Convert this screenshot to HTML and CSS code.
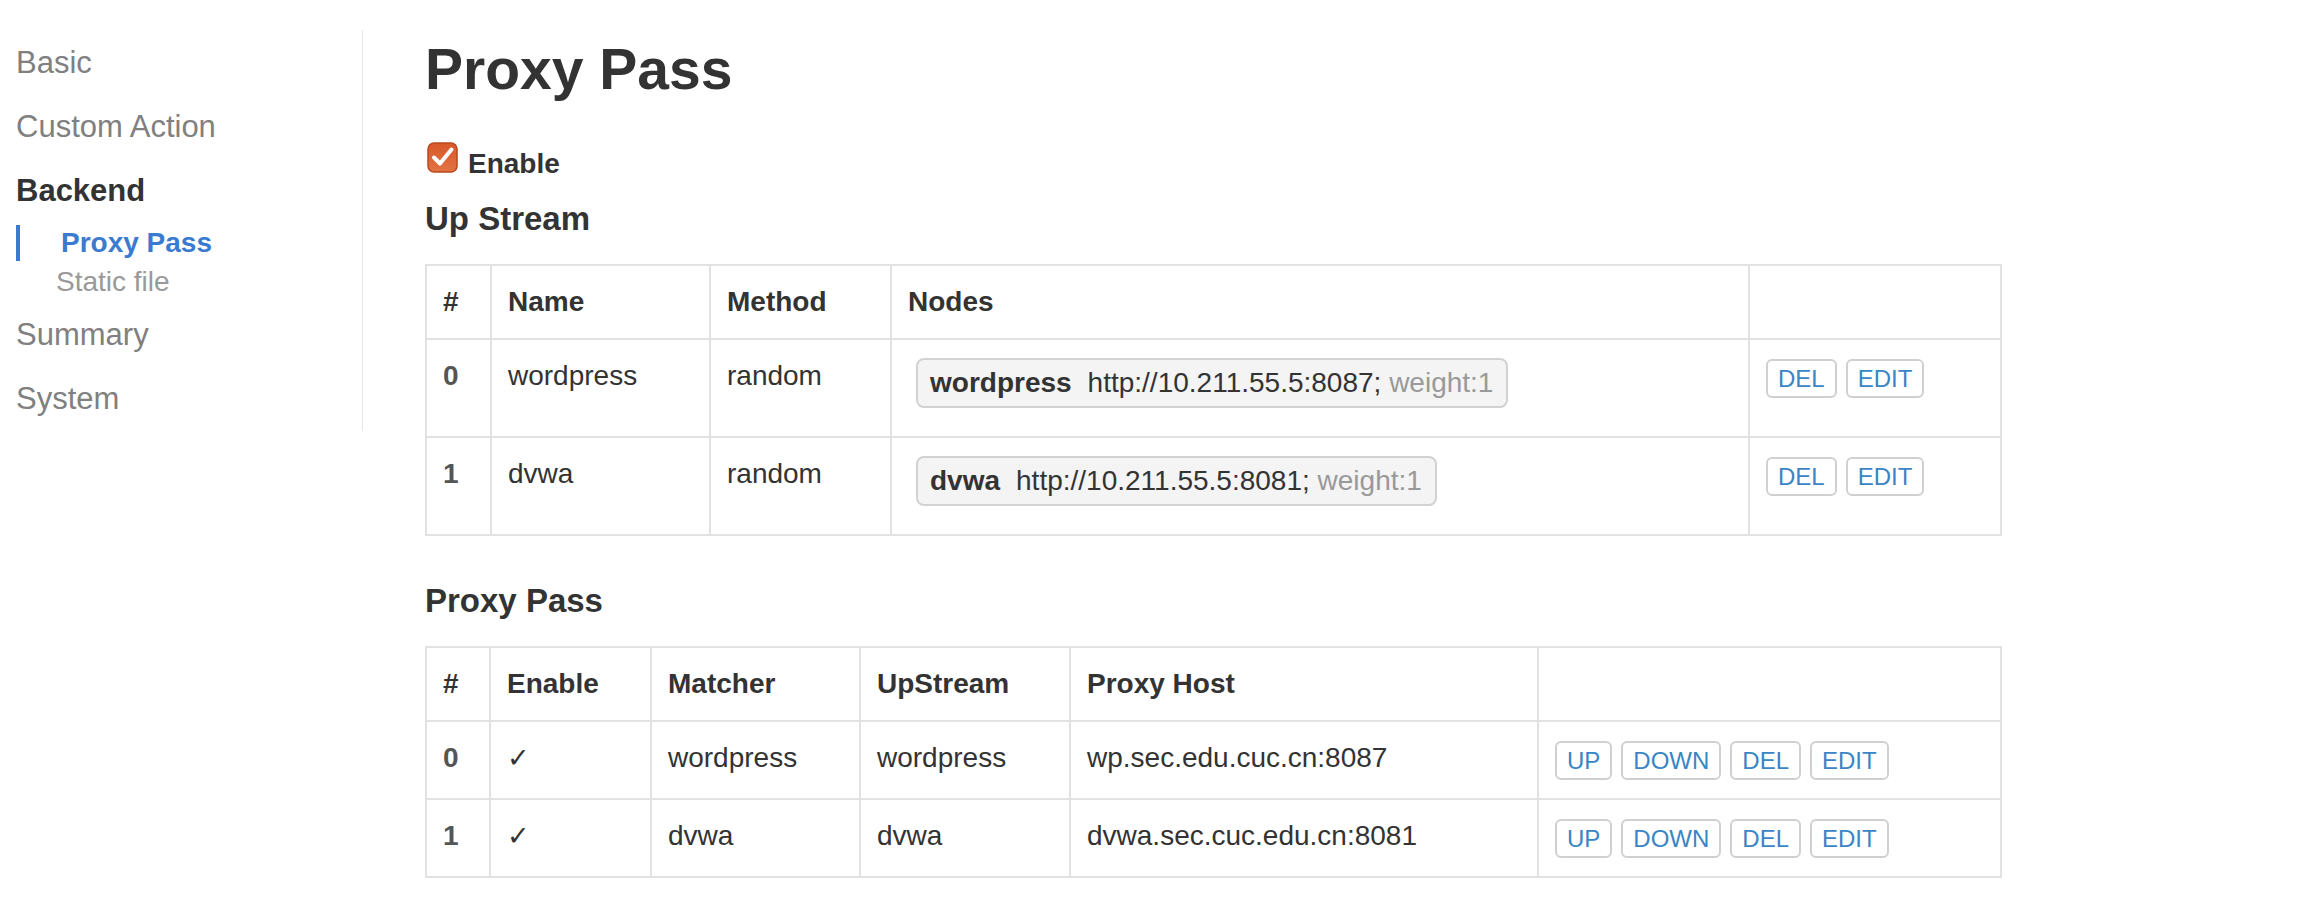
FILE: index.html
```html
<!DOCTYPE html>
<html lang="en">
<head>
<meta charset="utf-8">
<title>Proxy Pass</title>
<link rel="stylesheet" href="styles.css">
</head>
<body>
<div class="page">
  <nav class="sidebar">
    <ul class="nav">
      <li><a class="nav-link">Basic</a></li>
      <li><a class="nav-link">Custom Action</a></li>
      <li>
        <a class="nav-link current">Backend</a>
        <ul class="subnav">
          <li><a class="sub-link active">Proxy Pass</a></li>
          <li><a class="sub-link">Static file</a></li>
        </ul>
      </li>
      <li><a class="nav-link">Summary</a></li>
      <li><a class="nav-link">System</a></li>
    </ul>
  </nav>

  <main class="main">
    <h1 class="title">Proxy Pass</h1>

    <label class="enable">
      <svg class="checkbox" width="31" height="31" viewBox="0 0 31 31" aria-hidden="true">
        <defs>
          <linearGradient id="cbg" x1="0" y1="0" x2="0" y2="1">
            <stop offset="0" stop-color="#d8582a"/>
            <stop offset="1" stop-color="#e27444"/>
          </linearGradient>
        </defs>
        <rect x="1" y="1" width="29" height="29" rx="6" ry="6" fill="url(#cbg)" stroke="#b9481c" stroke-width="1.5"/>
        <path d="M7 15.5 L13 21.5 L24.5 7.5" fill="none" stroke="#fff" stroke-width="4" stroke-linecap="round" stroke-linejoin="round"/>
      </svg>
      <span>Enable</span>
    </label>

    <h3 class="section-title first">Up Stream</h3>
    <table class="grid">
      <colgroup>
        <col class="u-idx"><col class="u-name"><col class="u-method"><col class="u-nodes"><col class="u-act">
      </colgroup>
      <thead>
        <tr><th>#</th><th>Name</th><th>Method</th><th>Nodes</th><th></th></tr>
      </thead>
      <tbody>
        <tr>
          <td class="idx">0</td>
          <td>wordpress</td>
          <td>random</td>
          <td><span class="node"><b>wordpress</b>http://10.211.55.5:8087; <span class="weight">weight:1</span></span></td>
          <td><div class="actions"><span class="btn">DEL</span><span class="btn">EDIT</span></div></td>
        </tr>
        <tr>
          <td class="idx">1</td>
          <td>dvwa</td>
          <td>random</td>
          <td><span class="node"><b>dvwa</b>http://10.211.55.5:8081; <span class="weight">weight:1</span></span></td>
          <td><div class="actions"><span class="btn">DEL</span><span class="btn">EDIT</span></div></td>
        </tr>
      </tbody>
    </table>

    <h3 class="section-title second">Proxy Pass</h3>
    <table class="grid">
      <colgroup>
        <col class="p-idx"><col class="p-enable"><col class="p-matcher"><col class="p-up"><col class="p-host"><col class="p-act">
      </colgroup>
      <thead>
        <tr><th>#</th><th>Enable</th><th>Matcher</th><th>UpStream</th><th>Proxy Host</th><th></th></tr>
      </thead>
      <tbody>
        <tr>
          <td class="idx">0</td>
          <td><span class="tick">✓</span></td>
          <td>wordpress</td>
          <td>wordpress</td>
          <td>wp.sec.edu.cuc.cn:8087</td>
          <td><div class="actions"><span class="btn">UP</span><span class="btn">DOWN</span><span class="btn">DEL</span><span class="btn">EDIT</span></div></td>
        </tr>
        <tr>
          <td class="idx">1</td>
          <td><span class="tick">✓</span></td>
          <td>dvwa</td>
          <td>dvwa</td>
          <td>dvwa.sec.cuc.edu.cn:8081</td>
          <td><div class="actions"><span class="btn">UP</span><span class="btn">DOWN</span><span class="btn">DEL</span><span class="btn">EDIT</span></div></td>
        </tr>
      </tbody>
    </table>
  </main>
</div>
</body>
</html>
```

FILE: styles.css
```css
* { box-sizing: content-box; }

body {
  margin: 0;
  background: #fff;
  color: #333;
  font-family: "Liberation Sans", Arial, Helvetica, sans-serif;
}

.page {
  display: flex;
  align-items: flex-start;
}

/* Sidebar */
.sidebar {
  width: 346px;
  padding-left: 16px;
  margin-top: 30px;
  border-right: 1px solid #e8e8e8;
}

.nav,
.subnav {
  list-style: none;
  margin: 0;
  padding: 0;
}

.nav {
  padding-top: 1px;
}

.nav-link {
  display: block;
  font-size: 31px;
  line-height: 42px;
  padding: 11px 0;
  color: #808080;
}

.nav-link.current {
  color: #333;
  font-weight: bold;
}

.sub-link {
  display: block;
  font-size: 28px;
  line-height: 36px;
  margin: 2px 0 3px;
  padding-left: 40px;
  color: #999;
}

.sub-link.active {
  font-weight: bold;
  color: #3a7bd0;
  border-left: 4px solid #3a7bd0;
  padding-left: 41px;
}

/* Main */
.main {
  padding: 38px 0 40px 62px;
}

.title {
  margin: 0;
  font-size: 57px;
  line-height: 62px;
  font-weight: bold;
  color: #333;
}

.enable {
  display: flex;
  align-items: baseline;
  gap: 10px;
  margin-top: 42px;
  padding-left: 2px;
  font-size: 28px;
  line-height: 40px;
  font-weight: bold;
}

.checkbox {
  display: block;
  flex: none;
}

.section-title {
  font-size: 33px;
  line-height: 36px;
  font-weight: bold;
  margin: 0;
}

.section-title.first {
  margin: 17px 0 27px;
}

.section-title.second {
  margin: 47px 0 27px;
}

/* Tables */
.grid {
  width: 1575px;
  table-layout: fixed;
  border-collapse: collapse;
  font-size: 28px;
  line-height: 40px;
}

.grid th,
.grid td {
  padding: 16px;
  text-align: left;
  vertical-align: top;
  border: 2px solid #e2e2e2;
  white-space: nowrap;
}

.grid th {
  font-weight: bold;
}

.grid td.idx {
  font-weight: bold;
  color: #555;
}

.u-idx { width: 65px; }
.u-name { width: 219px; }
.u-method { width: 181px; }
.u-nodes { width: 858px; }
.u-act { width: 252px; }

.p-idx { width: 64px; }
.p-enable { width: 161px; }
.p-matcher { width: 209px; }
.p-up { width: 210px; }
.p-host { width: 468px; }
.p-act { width: 463px; }

.node {
  display: inline-block;
  vertical-align: top;
  margin: 2px 0 12px 8px;
  padding: 3px 13px 3px 12px;
  line-height: 40px;
  border: 2px solid #d2d2d2;
  border-radius: 8px;
  background: #f4f4f4;
}

.node b {
  margin-right: 16px;
}

.weight {
  color: #999;
}

.tick {
  font-family: "DejaVu Sans", sans-serif;
  font-size: 27px;
}

.actions {
  display: flex;
  gap: 9px;
  padding: 3px 0 2px;
}

.btn {
  display: block;
  font-size: 24px;
  line-height: 33px;
  padding: 1px 10px;
  border: 2px solid #d0d0d0;
  border-radius: 6px;
  color: #3a85c6;
  background: #fff;
}
```
